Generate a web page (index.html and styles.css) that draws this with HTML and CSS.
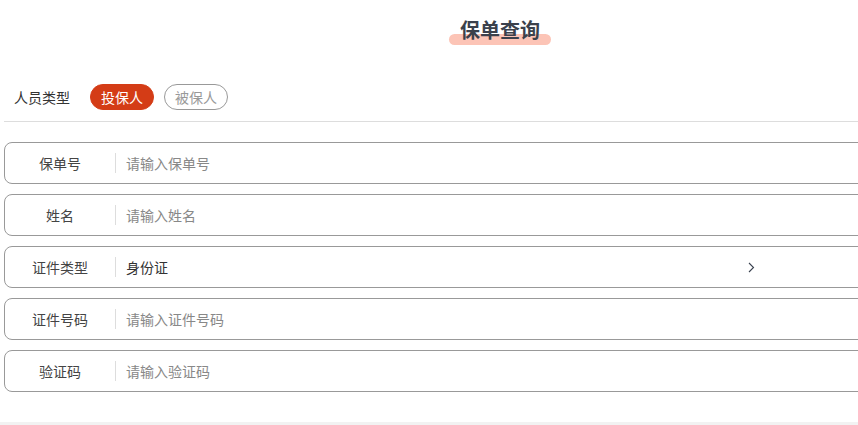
FILE: index.html
```html
<!DOCTYPE html>
<html lang="zh-CN">
<head>
<meta charset="UTF-8">
<meta name="viewport" content="width=device-width, initial-scale=1.0">
<title>保单查询</title>
<link rel="stylesheet" href="styles.css">
</head>
<body>

<div class="page">
  <!-- Title -->
  <div class="header">
    <h1 class="title">保单查询</h1>
  </div>

  <!-- Person type switch -->
  <div class="type-row">
    <span class="type-label">人员类型</span>
    <button class="type-btn active">投保人</button>
    <button class="type-btn">被保人</button>
  </div>

  <div class="form">
    <div class="field">
      <label class="field-label">保单号</label>
      <input class="field-input" type="text" placeholder="请输入保单号">
    </div>
    <div class="field">
      <label class="field-label">姓名</label>
      <input class="field-input" type="text" placeholder="请输入姓名">
    </div>
    <div class="field">
      <label class="field-label">证件类型</label>
      <div class="field-select">
        <span class="select-value">身份证</span>
        <svg class="chevron" width="7" height="11" viewBox="0 0 7 11"><path d="M1 1l4.5 4.5L1 10" fill="none" stroke="#3a4250" stroke-width="1.1"/></svg>
      </div>
    </div>
    <div class="field">
      <label class="field-label">证件号码</label>
      <input class="field-input" type="text" placeholder="请输入证件号码">
    </div>
    <div class="field">
      <label class="field-label">验证码</label>
      <input class="field-input" type="text" placeholder="请输入验证码">
    </div>
  </div>

  <div class="footer"></div>
</div>

</body>
</html>
```

FILE: styles.css
```css
body {
  margin: 0;
  background-color: white;
  color: #333;
  font-family: "Noto Sans CJK SC", "Noto Sans", sans-serif;
  overflow: hidden;
}
.page {
  width: 1000px; /* wider than the window, fields run off the right edge */
}
.header {
  height: 44px;
  padding-top: 16px;
  text-align: center;
}
.title {
  position: relative;
  display: inline-block;
  margin: 0;
  font-size: 20px;
  line-height: 28px;
  font-weight: bold;
  color: #3b414c;
  z-index: 0;
}
.title::after {
  content: "";
  position: absolute;
  left: -11px;
  right: -11px;
  bottom: -1px;
  height: 11px;
  border-radius: 6px;
  background-color: #fcc4b6;
  z-index: -1;
}
.type-row {
  display: flex;
  align-items: center;
  margin: 24px 0 0 4px;
  padding: 0 0 11px 10px;
  border-bottom: 1px solid #dddddd;
}
.type-label {
  font-size: 14px;
  color: #333;
  margin-right: 20px;
}
.type-btn {
  width: 64px;
  height: 26px;
  margin-right: 10px;
  padding: 0;
  border: 1px solid #999;
  border-radius: 13px;
  background-color: white;
  color: #999;
  font-family: inherit;
  font-size: 14px;
  cursor: pointer;
}
.type-btn.active {
  background-color: #d43c16;
  border-color: #d43c16;
  color: white;
}
.form {
  display: flex;
  flex-direction: column;
  gap: 10px;
  padding: 20px 4px 30px;
}
.field {
  display: flex;
  align-items: center;
  height: 40px;
  border: 1px solid #999;
  border-radius: 8px;
}
.field-label {
  width: 110px;
  text-align: center;
  font-size: 14px;
  color: #444;
  border-right: 1px solid #ddd;
  line-height: 20px;
}
.field-input {
  flex: 1;
  border: none;
  outline: none;
  padding: 0 0 0 10px;
  font-family: inherit;
  font-size: 14px;
  color: #333;
  background: transparent;
}
.field-input::placeholder {
  color: #888;
}
.field-select {
  flex: 1;
  display: flex;
  align-items: center;
  padding-left: 10px;
  font-size: 14px;
  color: #333;
}
.select-value {
  flex: 1;
}
.chevron {
  margin-right: 240px;
}
.footer {
  height: 10px;
  background-color: #f2f2f2;
}
```
